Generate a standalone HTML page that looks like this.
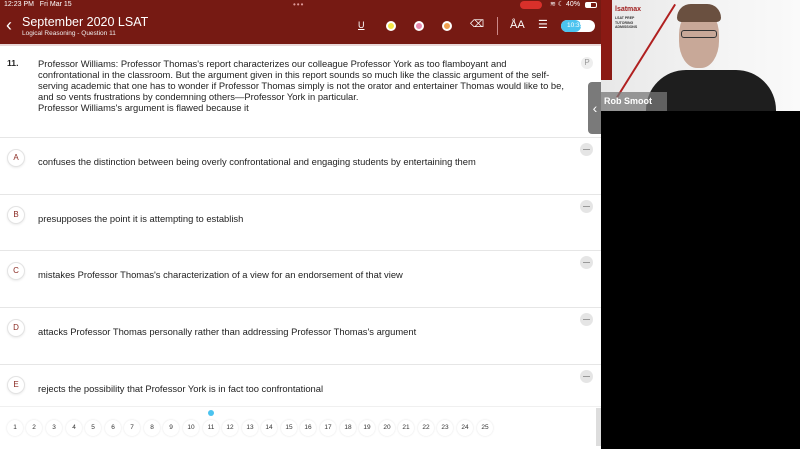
<!DOCTYPE html>
<html><head><meta charset="utf-8"><style>
*{margin:0;padding:0;box-sizing:border-box}
body{width:800px;height:449px;overflow:hidden;background:#fff;font-family:"Liberation Sans",sans-serif;position:relative}
.hdr{position:absolute;left:0;top:0;width:601px;height:44px;background:#761a13;color:#fff}
.abs{position:absolute}
.q{position:absolute;left:38px;top:58px;font-size:9.4px;line-height:11px;color:#222;white-space:nowrap}
.sep{position:absolute;left:0;width:601px;height:1px;background:#e6e6e6}
.circ{position:absolute;left:7px;width:18px;height:18px;border-radius:50%;border:1px solid #e3e3e3;background:#fff;color:#8a2a22;font-size:8px;text-align:center;line-height:16px;box-shadow:0 1px 2px rgba(0,0,0,.08)}
.opt{position:absolute;left:38px;font-size:9.4px;color:#222}
.minus{position:absolute;left:580px;width:13px;height:13px;border-radius:50%;background:#e5e5e5}
.minus:after{content:"";position:absolute;left:3px;top:6px;width:7px;height:1px;background:#999}
.pn{position:absolute;top:420px;width:16px;height:16px;border-radius:50%;background:#fff;box-shadow:0 0 2px rgba(0,0,0,.12);font-size:6.5px;text-align:center;line-height:16px;color:#333}
</style></head><body>
<div class="hdr">
<div class="abs" style="left:4px;top:1px;font-size:7px">12:23 PM&nbsp;&nbsp; Fri Mar 15</div>
<div class="abs" style="left:293px;top:0px;font-size:8px;letter-spacing:1px;color:#d99">•••</div>
<div class="abs" style="left:520px;top:1px;width:22px;height:8px;border-radius:4px;background:#d8302a"></div>
<div class="abs" style="left:550px;top:0px;font-size:7px">≋ ☾ 40%</div>
<div class="abs" style="left:585px;top:2px;width:12px;height:6px;border:1px solid #fff;border-radius:2px"><div style="width:5px;height:4px;background:#fff"></div></div>
<div class="abs" style="left:6px;top:15px;font-size:18px;font-weight:300">‹</div>
<div class="abs" style="left:22px;top:15px;font-size:12.5px">September 2020 LSAT</div>
<div class="abs" style="left:22px;top:30px;font-size:6.5px;color:#eee">Logical Reasoning - Question 11</div>
<div class="abs" style="left:358px;top:20px;font-size:9px;text-decoration:underline">U</div>
<div class="abs" style="left:386px;top:21px;width:10px;height:10px;border-radius:50%;background:#f5e84a;border:2px solid #fff"></div>
<div class="abs" style="left:414px;top:21px;width:10px;height:10px;border-radius:50%;background:#e88ab0;border:2px solid #fff"></div>
<div class="abs" style="left:442px;top:21px;width:10px;height:10px;border-radius:50%;background:#f0a050;border:2px solid #fff"></div>
<div class="abs" style="left:470px;top:19px;font-size:10px">⌫</div>
<div class="abs" style="left:497px;top:17px;width:1px;height:18px;background:#c88"></div>
<div class="abs" style="left:510px;top:19px;font-size:11px">ÅA</div>
<div class="abs" style="left:538px;top:18px;font-size:11px">☰</div>
<div class="abs" style="left:561px;top:20px;width:34px;height:12px;border-radius:6px;background:#fff"><div style="width:20px;height:12px;border-radius:6px;background:#4bc3ef;font-size:6.5px;color:#fff;line-height:12px;padding-left:6px">10:39</div></div>
</div>
<div class="abs" style="left:0;top:44px;width:601px;height:2px;background:#e8d8d8"></div>
<div class="abs" style="left:7px;top:58px;font-size:8.6px;font-weight:bold;color:#222">11.</div>
<div class="q">Professor Williams: Professor Thomas's report characterizes our colleague Professor York as too flamboyant and<br>confrontational in the classroom. But the argument given in this report sounds so much like the classic argument of the self-<br>serving academic that one has to wonder if Professor Thomas simply is not the orator and entertainer Thomas would like to be,<br>and so vents frustrations by condemning others—Professor York in particular.<br>Professor Williams's argument is flawed because it</div>
<div class="abs" style="left:581px;top:57px;width:12px;height:12px;border-radius:50%;background:#eee;font-size:8px;color:#999;text-align:center;line-height:12px">P</div>
<div class="sep" style="top:137px"></div>
<div class="circ" style="top:149px">A</div><div class="opt" style="top:156px">confuses the distinction between being overly confrontational and engaging students by entertaining them</div><div class="minus" style="top:143px"></div>
<div class="sep" style="top:194px"></div>
<div class="circ" style="top:206px">B</div><div class="opt" style="top:213px">presupposes the point it is attempting to establish</div><div class="minus" style="top:200px"></div>
<div class="sep" style="top:250px"></div>
<div class="circ" style="top:262px">C</div><div class="opt" style="top:269px">mistakes Professor Thomas's characterization of a view for an endorsement of that view</div><div class="minus" style="top:256px"></div>
<div class="sep" style="top:307px"></div>
<div class="circ" style="top:319px">D</div><div class="opt" style="top:326px">attacks Professor Thomas personally rather than addressing Professor Thomas's argument</div><div class="minus" style="top:313px"></div>
<div class="sep" style="top:364px"></div>
<div class="circ" style="top:376px">E</div><div class="opt" style="top:383px">rejects the possibility that Professor York is in fact too confrontational</div><div class="minus" style="top:370px"></div>
<div class="abs" style="left:0;top:406px;width:601px;height:1px;background:#f0f0f0"></div>
<div class="abs" style="left:208px;top:410px;width:6px;height:6px;border-radius:50%;background:#4bc3ef"></div>
<div class="pn" style="left:7px">1</div><div class="pn" style="left:26px">2</div><div class="pn" style="left:46px">3</div><div class="pn" style="left:66px">4</div><div class="pn" style="left:85px">5</div><div class="pn" style="left:105px">6</div><div class="pn" style="left:124px">7</div><div class="pn" style="left:144px">8</div><div class="pn" style="left:163px">9</div><div class="pn" style="left:183px">10</div><div class="pn" style="left:203px">11</div><div class="pn" style="left:222px">12</div><div class="pn" style="left:242px">13</div><div class="pn" style="left:261px">14</div><div class="pn" style="left:281px">15</div><div class="pn" style="left:300px">16</div><div class="pn" style="left:320px">17</div><div class="pn" style="left:340px">18</div><div class="pn" style="left:359px">19</div><div class="pn" style="left:379px">20</div><div class="pn" style="left:398px">21</div><div class="pn" style="left:418px">22</div><div class="pn" style="left:437px">23</div><div class="pn" style="left:457px">24</div><div class="pn" style="left:477px">25</div>
<div class="abs" style="left:596px;top:408px;width:5px;height:38px;background:#ddd"></div>
<div class="abs" style="left:588px;top:82px;width:14px;height:52px;border-radius:4px 0 0 4px;background:#7a7a7a;color:#fff;font-size:14px;line-height:52px;text-align:center">‹</div>
<div class="abs" style="left:601px;top:0;width:199px;height:449px;background:#000"></div>
<div class="abs" style="left:601px;top:0;width:199px;height:111px;background:linear-gradient(90deg,#e8e8e8,#f4f4f4 60%,#fafafa);overflow:hidden">
<div class="abs" style="left:0;top:0;width:11px;height:80px;background:#8a1a14"></div>
<div class="abs" style="left:-10px;top:50px;width:110px;height:2px;background:#b02020;transform:rotate(-58deg)"></div>
<div class="abs" style="left:14px;top:6px;font-size:7px;color:#a02020;font-weight:bold">lsatmax</div>
<div class="abs" style="left:14px;top:16px;font-size:3.5px;line-height:4.5px;color:#333;font-weight:bold">LSAT PREP<br>TUTORING<br>ADMISSIONS</div>
<div class="abs" style="left:45px;top:70px;width:130px;height:60px;border-radius:40px 40px 0 0;background:#1e1e1e"></div>
<div class="abs" style="left:78px;top:8px;width:40px;height:60px;border-radius:45%;background:#c8a898"></div>
<div class="abs" style="left:76px;top:4px;width:44px;height:18px;border-radius:20px 20px 6px 6px;background:#6a5040"></div>
<div class="abs" style="left:80px;top:30px;width:36px;height:8px;border:1.5px solid #333;border-radius:3px"></div>
<div class="abs" style="left:0;top:92px;width:66px;height:19px;background:rgba(120,120,120,.75)"></div>
<div class="abs" style="left:3px;top:96px;font-size:9px;font-weight:bold;color:#fff">Rob Smoot</div>
</div>
</body></html>
